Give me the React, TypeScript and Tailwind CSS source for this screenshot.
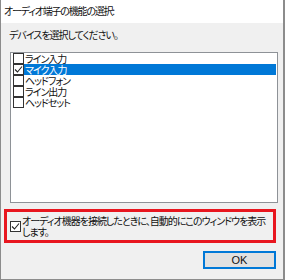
import React from "react";

const jp = "font-['Meiryo_UI','Noto_Sans_CJK_JP',sans-serif] [font-feature-settings:'palt']";

function Box({ checked }: { checked?: boolean }) {
  return (
    <span className="w-[11px] h-[11px] border border-[#333] bg-white flex items-center justify-center shrink-0">
      {checked && (
        <svg width="9" height="9" viewBox="0 0 9 9">
          <path d="M1 4.5 L3.5 7 L8 1.5" fill="none" stroke="#222" strokeWidth="1.1" />
        </svg>
      )}
    </span>
  );
}

export default function App() {
  const items = [
    { label: "ライン入力", checked: false, sel: false },
    { label: "マイク入力", checked: true, sel: true },
    { label: "ヘッドフォン", checked: false, sel: false },
    { label: "ライン出力", checked: false, sel: false },
    { label: "ヘッドセット", checked: false, sel: false },
  ];

  return (
    <div className={`w-[285px] h-[280px] bg-[#f0f0f0] border-l border-r-2 border-b border-[#8c8c8c] flex flex-col text-[#111] ${jp}`}>
      {/* title */}
      <div className="h-[23px] bg-white pl-[3px] pt-[4px] text-[10px] leading-[14px] tracking-[-1.2px]">
        オーディオ端子の機能の選択:
      </div>

      <div className="flex flex-col pl-[8px]">
        <div className="pt-[5px] text-[10px] leading-[14px] tracking-[-1px] h-[29px]">デバイスを選択してください。</div>

        {/* list */}
        <div className="ml-[1px] w-[268px] h-[151px] border border-[#8e9297] bg-white pl-[2px] flex flex-col">
          {items.map((it) => (
            <div key={it.label} className="h-[11px] flex items-center">
              <Box checked={it.checked} />
              <span
                className={`h-[11px] flex items-center text-[10px] leading-[11px] tracking-[-1px] pl-[1px] ${
                  it.sel ? "bg-[#0078d7] text-white w-[252px]" : ""
                }`}
              >
                {it.label}
              </span>
            </div>
          ))}
        </div>
      </div>

      {/* auto-show option */}
      <div className="ml-[3px] mt-[6px] w-[272px] h-[34px] border-[3px] border-[#e8161f] flex items-center pl-[3px]">
        <Box checked />
        <span className="text-[10px] leading-[11px] tracking-[-1px] pl-[1px] whitespace-nowrap">
          オーディオ機器を接続したときに、自動的にこのウィンドウを表示
          <br />
          します。
        </span>
      </div>

      <div className="flex justify-end pr-[7px] mt-[8px]">
        <button className="w-[73px] h-[18px] border-2 border-[#0078d7] bg-[#e1e1e1] text-[11px] leading-[14px] font-['Liberation_Sans',sans-serif]">
          OK
        </button>
      </div>
    </div>
  );
}
